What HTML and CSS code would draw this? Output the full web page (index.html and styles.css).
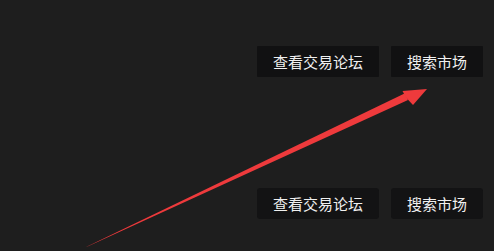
FILE: index.html
```html
<!DOCTYPE html>
<html lang="zh-CN">
<head>
  <meta charset="UTF-8" />
  <meta name="viewport" content="width=device-width, initial-scale=1" />
  <title>交易论坛</title>
  <link rel="stylesheet" href="styles.css">
</head>
<body>
  <main class="page">
    <div class="actions actions-top">
      <button class="btn btn-flat">查看交易论坛</button>
      <button class="btn btn-flat">搜索市场</button>
    </div>
    <div class="actions actions-bottom">
      <button class="btn">查看交易论坛</button>
      <button class="btn">搜索市场</button>
    </div>

    <!-- annotation arrow drawn over the page -->
    <svg class="arrow" width="494" height="251" viewBox="0 0 494 251" aria-hidden="true">
      <polygon fill="#ee3a3c" points="86,247 87.5,246.5 408,100 404.5,93.5" />
      <polygon fill="#ee3a3c" points="427,89 402.5,91 406,97.5 413,105" />
    </svg>
  </main>
</body>
</html>
```

FILE: styles.css
```css
html, body {
  margin: 0;
  padding: 0;
}
body {
  background: #1e1e1e;
  font-family: "Noto Sans CJK SC", "Noto Sans", sans-serif;
  color: #f0f0f0;
  width: 494px;
  height: 251px;
  overflow: hidden;
}
.page {
  position: relative;
  height: 251px;
  padding: 0 11px 0 0;
  box-sizing: border-box;
}
.actions {
  display: flex;
  justify-content: flex-end;
  gap: 12px;
}
.actions-top {
  padding-top: 46px;
}
.actions-bottom {
  padding-top: 111px;
}
.btn {
  font-family: inherit;
  font-size: 15px;
  line-height: 31px;
  height: 31px;
  padding: 0 16px;
  border: none;
  border-radius: 3px;
  background: #131314;
  color: #f0f0f0;
  cursor: pointer;
}
.btn-flat {
  border-radius: 1px;
  background: #111112;
}
.arrow {
  position: absolute;
  left: 0;
  top: 0;
  pointer-events: none;
}
```
